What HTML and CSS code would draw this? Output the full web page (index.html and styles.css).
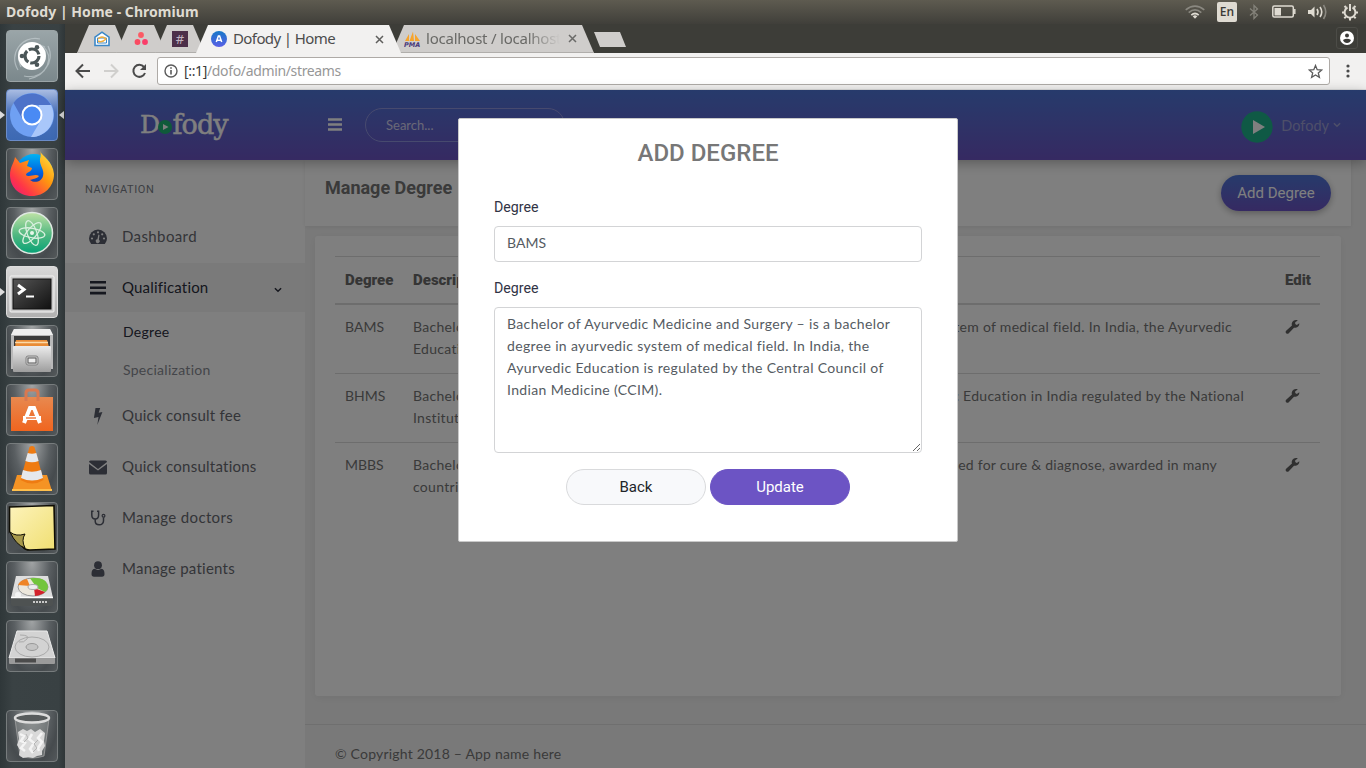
FILE: index.html
```html
<!DOCTYPE html>
<html lang="en">
<head>
<meta charset="utf-8">
<title>Dofody | Home</title>
<link rel="stylesheet" href="styles.css">
</head>
<body>
<svg width="0" height="0" class="defs">
  <defs>
    <linearGradient id="gAtom" x2="0" y2="1"><stop stop-color="#bfe3a6"/><stop offset=".55" stop-color="#4fb780"/><stop offset="1" stop-color="#07a276"/></linearGradient>
    <linearGradient id="gFox" x1="1" y1="0" x2="0" y2="1"><stop stop-color="#fff04a"/><stop offset=".4" stop-color="#ff980e"/><stop offset=".75" stop-color="#ff3647"/><stop offset="1" stop-color="#e31587"/></linearGradient>
    <linearGradient id="gBlue" x2="0" y2="1"><stop stop-color="#00b3f4"/><stop offset=".5" stop-color="#0060df"/><stop offset="1" stop-color="#2b1d6f"/></linearGradient>
    <linearGradient id="gSilver" x2="0" y2="1"><stop stop-color="#ececec"/><stop offset="1" stop-color="#9d9d9d"/></linearGradient>
    <linearGradient id="gOrange" x2="0" y2="1"><stop stop-color="#e8894f"/><stop offset="1" stop-color="#f0651f"/></linearGradient>
    <linearGradient id="gNote" x2="1" y2="1"><stop stop-color="#fdf3bb"/><stop offset="1" stop-color="#f0df72"/></linearGradient>
    <linearGradient id="gTerm" x2="1" y2="1"><stop stop-color="#555"/><stop offset=".6" stop-color="#2c2c2c"/><stop offset="1" stop-color="#111"/></linearGradient>
    <symbol id="wrench" viewBox="0 0 16 16"><path d="M1.2 12.4 7.4 6.9C6.6 4.2 8.3 1.3 11.6 1.1c.8 0 1.6.2 2 .4L10.900 3.400v1.900l1.700 1 2.700-1.700c.2 2.500-1.500 4.700-4 4.800-.6 0-1.200-.1-1.700-.2L4 15.200c-.8.8-2 .7-2.700 0-.8-.8-.8-2-.1-2.800z"/></symbol>
    <symbol id="chev" viewBox="0 0 8 6"><path d="M.9 1.2 4 4.200 7.100 1.200" fill="none" stroke="currentColor" stroke-width="1.500"/></symbol>
  </defs>
</svg>

<header class="panel">
  <div class="panel-title">Dofody | Home - Chromium</div>
  <div class="indicators">
    <svg class="i-wifi" width="20" height="14" viewBox="0 0 20 14" fill="none" stroke-width="1.700"><path d="M.7 4.800Q10-2.500 19.300 4.800M3.700 7.600Q10 2.200 16.300 7.600" stroke="#8a8880"/><path d="M6.300 10.200Q10 6.800 13.700 10.200" stroke="#dfdbd2"/><path d="M7.700 11.300Q10 9.400 12.300 11.300L10 13.700z" fill="#dfdbd2"/></svg>
    <span class="i-lang">En</span>
    <svg class="i-bt" width="10" height="16" viewBox="0 0 10 16" fill="none" stroke="#84827a" stroke-width="1.300"><path d="M1 4.500 8.500 11 5 14.500v-13L8.500 5 1 11.500"/></svg>
    <svg class="i-bat" width="24" height="14" viewBox="0 0 24 14"><rect x=".8" y="1" width="20.500" height="11" rx="1.500" fill="none" stroke="#dfdbd2" stroke-width="1.500"/><rect x="2.500" y="3" width="6.500" height="7.500" fill="#dfdbd2"/><path d="M22.800 4v5" stroke="#dfdbd2" stroke-width="1.500"/></svg>
    <svg class="i-vol" width="21" height="18" viewBox="0 0 21 18" fill="none" stroke="#dfdbd2" stroke-width="1.600"><path d="M1 7h3l3.500-3.500v11L4 11H1z" fill="#dfdbd2" stroke="none"/><path d="M10 6q2 3 0 6M13 4q3.500 5 0 10"/><path d="M16.500 2q4.500 7 0 14" stroke="#8a8880"/></svg>
    <svg class="i-gear" width="18" height="18" viewBox="0 0 18 18" fill="none" stroke="#dfdbd2" stroke-width="2"><path d="M6.500 4.500a5.400 5.400 0 1 0 5 0"/><path d="M9 1v7"/><path d="M3.500 3 5 4.500M14.500 3 13 4.500M1 9.500h2.500M14.500 9.500H17M3.300 15.300 5 13.600M14.700 15.300 13 13.600M9 15v2.500"/></svg>
  </div>
</header>

<div class="desktop">
  <nav class="launcher">
    <div class="tile t-dash"><svg viewBox="0 0 52 52"><g fill="none" stroke="#c6d0d2" stroke-opacity=".65" stroke-width="1.200"><path d="M12 40C2 24 16 5 34 9M42 16c8 16-6 34-24 30M15 37C7 20 22 7 39 17M37 16c12 12 4 29-14 33"/></g><circle cx="26" cy="26" r="14" fill="#fff"/><circle cx="26" cy="26" r="7" fill="none" stroke="#4b5658" stroke-width="3.200" stroke-dasharray="12.700 2"/><g fill="#4b5658"><circle cx="16" cy="26" r="2.300"/><circle cx="31" cy="17.300" r="2.300"/><circle cx="31" cy="34.700" r="2.300"/></g></svg></div>
    <div class="tile t-chromium active"><svg viewBox="0 0 52 52"><circle cx="26" cy="26" r="22" fill="#6fa0f3"/><path d="M7.500 14A22 22 0 0 1 45 16H26L17 31z" fill="#4d72c9"/><path d="M45 16A22 22 0 0 1 25 48L35 31 33 16z" fill="#a9c7fa"/><circle cx="26" cy="26" r="10.500" fill="#fff"/><circle cx="26" cy="26" r="8.500" fill="#4a8af4"/></svg></div>
    <div class="tile"><svg viewBox="0 0 52 52"><circle cx="28" cy="25" r="19" fill="url(#gBlue)"/><path d="M34 3c2 5 13 10 14 23 0 13-10 22-22 22C12 48 4 38 4 27c0-8 4-12 5-18l5 6 9-3-2 6 5 2c0 4-6 4-6 7 3 3 9-2 13 1-2 3-7 3-9 4 5 4 12 1 13-4 2-6-4-11-3-17 1-4 1-6 0-8z" fill="url(#gFox)"/></svg></div>
    <div class="tile"><svg viewBox="0 0 52 52"><circle cx="26" cy="26" r="20.500" fill="url(#gAtom)" stroke="#dfe8e2" stroke-width="1.500"/><g fill="none" stroke="#d9f0df" stroke-width="1.300"><ellipse cx="26" cy="26" rx="13" ry="4.800" transform="rotate(10 26 26)"/><ellipse cx="26" cy="26" rx="13" ry="4.800" transform="rotate(70 26 26)"/><ellipse cx="26" cy="26" rx="13" ry="4.800" transform="rotate(130 26 26)"/></g><circle cx="26" cy="26" r="2" fill="#e8f7ea"/></svg></div>
    <div class="tile t-term"><svg viewBox="0 0 52 52"><rect x="4" y="10" width="44" height="36" rx="1" fill="#c9c9c9" stroke="#f3f3f3"/><rect x="7" y="13" width="38" height="30" fill="url(#gTerm)" stroke="#111"/><path d="m12 19 6 4.500-6 4.500" fill="none" stroke="#fff" stroke-width="3"/><path d="M20 30.500h8" stroke="#fff" stroke-width="2"/></svg></div>
    <div class="tile"><svg viewBox="0 0 52 52"><path d="M8 4h36l3 6v34H5V10z" fill="#b9b9b9"/><path d="M8 4h36l3 6H5z" fill="#efefef"/><path d="M8 11h36v12H8z" fill="#3b3b3b"/><path d="M10 15h31l2 7H9z" fill="#e98b35"/><path d="M9 17.500h33" stroke="#fbd9a8" stroke-width="1.500"/><rect x="7" y="21" width="38" height="26" rx="1" fill="url(#gSilver)"/><rect x="20" y="31" width="12" height="9" rx="2" fill="#d5d5d5" stroke="#808080"/><rect x="22" y="33" width="8" height="5" fill="#eee" stroke="#555"/></svg></div>
    <div class="tile"><svg viewBox="0 0 52 52"><path d="M5 13h42v34H5z" fill="url(#gOrange)"/><path d="M20 17V9q0-3 3-3h6q3 0 3 3v8" fill="none" stroke="#d9784f" stroke-width="3"/><path d="m18 39 6-15h4l6 15" fill="none" stroke="#fff" stroke-width="4"/><path d="M17 34h18" stroke="#fff" stroke-width="4"/><path d="M20 34h10" stroke="#ef6b2a" stroke-width="1.300"/></svg></div>
    <div class="tile"><svg viewBox="0 0 52 52"><path d="M11 32h30l5 16H6z" fill="#f59324"/><path d="M6 46h40v2H6z" fill="#ffc04d"/><path d="M23.500 4q2.500-2 5 0l9 33q-11 7-23 0z" fill="#ee7b12"/><path d="m21.700 10-2.300 8q6.600 2.500 13.200 0L30.300 10q-4.300 1.500-8.600 0zM17 27l-2 8q11 5 22 0l-2-8q-9 3.500-18 0z" fill="#e5e8ec"/></svg></div>
    <div class="tile"><svg viewBox="0 0 52 52"><path d="M3.500 5 48 3.500 49 47 24 48q-5 0-7-3L3.500 31z" fill="url(#gNote)" stroke="#0f0d04" stroke-width="1.600"/><path d="M3 30 17 47 3 49z" fill="#4c5154"/><path d="M4 30q6 5 15 2-4 6 0 14-9-3-15-16z" fill="#a89a4b" stroke="#0f0d04"/></svg></div>
    <div class="tile"><svg viewBox="0 0 52 52"><path d="M10 15h32l5 22H5z" fill="#dedede"/><path d="M5 37h42v6q0 2-2 2H7q-2 0-2-2z" fill="#4e5252"/><path d="M5 36.500h42" stroke="#fff" stroke-width="1.500"/><ellipse cx="27" cy="26" rx="15" ry="9" fill="#ece7dc" stroke="#999"/><path d="M24 17.200q17-2 18 8.800 0 3-3 5l-8-4z" fill="#72c53b"/><path d="m28 27 11 4q-3 3-10 4z" fill="#d3222a"/><path d="m24 25-12-1q2-5 9-6z" fill="#ef8425"/><ellipse cx="27" cy="26" rx="5" ry="2.500" fill="#eee" stroke="#aaa"/><circle cx="12" cy="34" r="3" fill="#f4f4f4"/><path d="M27 41h14" stroke="#c9c9c9" stroke-width="2" stroke-dasharray="2 1"/></svg></div>
    <div class="tile"><svg viewBox="0 0 52 52"><path d="M11 11h30l8 27H3z" fill="#d3d3d3" stroke="#ececec"/><path d="M3 38h46v5q0 1-1 1H4q-1 0-1-1z" fill="#9a9a9a"/><path d="M9 38.500h21v4H9z" fill="#4c4c4c"/><ellipse cx="26" cy="27" rx="17" ry="10" fill="none" stroke="#aaa"/><ellipse cx="26" cy="27" rx="6" ry="3.500" fill="#c4c4c4" stroke="#999"/><path d="M14 15q10 0 7 4t-8 3" fill="none" stroke="#aaa"/></svg></div>
    <div class="tile t-trash"><svg viewBox="0 0 52 52"><path d="M9 9h34l-5 37q-12 4-24 0z" fill="#8b8f90" fill-opacity=".5" stroke="#aaa" stroke-width=".7"/><ellipse cx="26" cy="8" rx="17" ry="4.500" fill="#575b5c" stroke="#dcdcdc" stroke-width="2.500"/><path d="m12 22 5-3 4 2 4-2 4 3 5-3 5 4-1 8 1 5-3 5v4l-5 1-4 2-5-1-5 1-4-3 1-5-3-5 2-6z" fill="#d9d9d9"/><path d="m14 24 4 2-3 5 4 2-4 5 4 3M26 24l-3 5 5 4-4 6 3 4M36 23l-4 5 4 4-4 6 1 3" fill="none" stroke="#f4f4f4" stroke-width="2.500"/><path d="m20 24 2 4-4 4M32 30l-4 4 3 4-4 4" fill="none" stroke="#b5b5b5"/></svg></div>
  </nav>

  <main class="browser">
    <div class="tabstrip">
      <div class="tab pinned"><svg width="16" height="16" viewBox="0 0 16 16"><path d="M1 6.200 8 1.200l7 5V14.500H1z" fill="#fff" stroke="#3b88c8" stroke-width="1.600"/><path d="M3.500 7h9v5h-9z" fill="none" stroke="#3b88c8"/><path d="M4 8q4-4 8 0-4 4-8 2" fill="none" stroke="#f0ac3c" stroke-width="1.400"/></svg></div>
      <div class="tab pinned"><svg width="16" height="16" viewBox="0 0 16 16"><circle cx="8" cy="4" r="2.900" fill="#fc5a64"/><circle cx="4.500" cy="11" r="2.900" fill="#fa4b62"/><circle cx="12" cy="11" r="2.900" fill="#fa3d6a"/></svg></div>
      <div class="tab pinned p3"><span class="slack">#</span></div>
      <div class="tab current"><svg class="fav" width="16" height="16" viewBox="0 0 16 16"><defs><linearGradient id="gF" x2="0" y2="1"><stop stop-color="#1678c8"/><stop offset="1" stop-color="#5a5fe6"/></linearGradient></defs><circle cx="8" cy="8" r="8" fill="url(#gF)"/><path d="m5.300 11 2.100-6h1.200l2.100 6M6.200 9.300h3.600" fill="none" stroke="#fff" stroke-width="1.500"/></svg><span class="tab-t">Dofody | Home</span><svg class="x" width="9" height="9" viewBox="0 0 9 9"><path d="m1 1 7 7M8 1 1 8" stroke="#5f5f5d" stroke-width="1.500"/></svg></div>
      <div class="tab other"><svg class="fav" width="17" height="16" viewBox="0 0 17 16"><path d="m1 10 4-7v7zM5.500 10 9 .5l1 9.500zM11 10V3l5 7z" fill="#f7a42b"/><text x="0" y="15.500" class="pma">PMA</text></svg><span class="tab-t faded">localhost / localhost</span><svg class="x" width="9" height="9" viewBox="0 0 9 9"><path d="m1 1 7 7M8 1 1 8" stroke="#6a6a68" stroke-width="1.500"/></svg></div>
      <div class="newtab"></div>
      <div class="avatar"><svg width="14" height="14" viewBox="0 0 14 14"><circle cx="7" cy="7" r="7" fill="#fff"/><circle cx="7" cy="4.600" r="2" fill="#3c3b37"/><path d="M3 9q4-2.500 8 0-1 3-4 3t-4-3z" fill="#3c3b37"/></svg></div>
    </div>
    <div class="toolbar">
      <svg class="nav" width="16" height="16" viewBox="0 0 16 16" fill="none" stroke="#4a4a4a" stroke-width="2"><path d="M15 8H2M8 1.500 1.500 8 8 14.500"/></svg>
      <svg class="nav" width="16" height="16" viewBox="0 0 16 16" fill="none" stroke="#d0cfcd" stroke-width="2"><path d="M1 8h13M8 1.500 14.500 8 8 14.500"/></svg>
      <svg class="nav" width="16" height="16" viewBox="0 0 16 16"><path d="M13 4a6 6 0 1 0 1 6" fill="none" stroke="#4a4a4a" stroke-width="2"/><path d="M15 1v6H9z" fill="#4a4a4a"/></svg>
      <div class="omni"><svg width="14" height="14" viewBox="0 0 14 14" fill="none" stroke="#5b5b5b"><circle cx="7" cy="7" r="6" stroke-width="1.400"/><path d="M7 6v4.500M7 3.300v1.500" stroke-width="1.600"/></svg><span class="url"><b>[::1]</b>/dofo/admin/streams</span><svg class="star" width="15" height="15" viewBox="0 0 15 15" fill="none" stroke="#5b5b5b" stroke-width="1.300"><path d="m7.500 1.500 1.700 4.200 4.600.3-3.500 2.900 1.100 4.400-3.900-2.400-3.900 2.400L4.700 8.900 1.200 6l4.600-.3z"/></svg></div>
      <svg class="dots" width="4" height="14" viewBox="0 0 4 14" fill="#4a4a4a"><circle cx="2" cy="2" r="1.600"/><circle cx="2" cy="7" r="1.600"/><circle cx="2" cy="12" r="1.600"/></svg>
    </div>

    <div class="page">
      <header class="topbar">
        <div class="logo"><span>D</span><svg width="14" height="14" viewBox="0 0 14 14"><circle cx="7" cy="7" r="7" fill="#1fb574"/><path d="m5 4 5.500 3L5 10z" fill="#fff"/></svg><span class="rest">fody</span></div>
        <svg class="burger" width="14" height="14" viewBox="0 0 14 14" stroke="#fff" stroke-width="2.400"><path d="M0 1.500h14M0 6.500h14M0 11.500h14"/></svg>
        <div class="search"><span>Search...</span><svg width="12" height="12" viewBox="0 0 12 12" fill="none" stroke="#b9b4de"><circle cx="5" cy="5" r="4"/><path d="m8 8 3.500 3.500"/></svg></div>
        <div class="user"><svg width="32" height="32" viewBox="0 0 32 32"><circle cx="16" cy="16" r="15.700" fill="#1fb38a"/><path d="m12 9 12 7-12 7z" fill="#fff"/></svg><span>Dofody</span><svg class="uc" width="8" height="6"><use href="#chev"/></svg></div>
      </header>
      <div class="body">
        <aside class="side">
          <h6>NAVIGATION</h6>
          <a class="item"><svg viewBox="0 0 18 16"><path d="M2.200 15Q0 12.500 0 9.500a9 9 0 0 1 18 0q0 3-2.200 5.500z"/><g fill="#fff"><circle cx="3" cy="9.500" r="1.100"/><circle cx="4.800" cy="5.300" r="1.100"/><circle cx="9" cy="3.300" r="1.100"/><circle cx="13.200" cy="5.300" r="1.100"/><circle cx="15" cy="9.500" r="1.100"/><path d="M9.400 5.500 10.500 6 9.900 10.700a1.900 1.900 0 1 1-1.500-.4z"/></g></svg><span class="s4">Dashboard</span></a>
          <a class="item on"><svg viewBox="0 0 18 16"><path d="M1 1h16v2.600H1zM1 6.400h16V9H1zM1 11.800h16v2.600H1z"/></svg><span class="s2">Qualification</span><svg class="ch" width="8" height="6" viewBox="0 0 8 6"><use href="#chev"/></svg></a>
          <div class="sub"><a class="cur">Degree</a><a>Specialization</a></div>
          <a class="item"><svg viewBox="0 0 18 16"><path d="M6.500 0h4.700L9.700 4.800l3.700-.9L8.300 17l1.200-8-4.600 1z"/></svg><span>Quick consult fee</span></a>
          <a class="item"><svg viewBox="0 0 18 16"><path d="M1.500 1.500h15A1.500 1.500 0 0 1 18 3L9 10 0 3a1.500 1.500 0 0 1 1.500-1.500zM0 5l9 6.500L18 5v9a1.500 1.500 0 0 1-1.500 1.500h-15A1.500 1.500 0 0 1 0 14z"/></svg><span>Quick consultations</span></a>
          <a class="item"><svg viewBox="0 0 18 16"><path d="M4.500 1.300H2.800V5q0 4 3.400 4T9.600 5V1.300H8M6.200 9v2q0 3.800 4 3.800T14.500 11V7.500" fill="none" stroke="#585c6a" stroke-width="1.500"/><circle cx="14.500" cy="5.800" r="1.400" fill="none" stroke="#585c6a" stroke-width="1.200"/></svg><span class="s3">Manage doctors</span></a>
          <a class="item"><svg viewBox="0 0 18 16"><circle cx="9" cy="4.200" r="3.900"/><path d="M5.500 7.800Q9 10 12.500 7.800q3 .2 3 5.200 0 2.800-2.500 2.800H5Q2.500 15.800 2.500 13q0-5 3-5.200z"/></svg><span>Manage patients</span></a>
        </aside>
        <section class="content">
          <div class="titlebar"><h1>Manage Degree</h1><button class="add">Add Degree</button></div>
          <div class="card">
            <div class="row head"><b>Degree</b><b class="c2">Description</b><b class="c3">Edit</b></div>
            <div class="row"><span>BAMS</span><div class="c2"><p class="r1"><span>Bachelor of</span><span>system of medical field. In India, the Ayurvedic</span></p><p>Education</p></div><svg class="c3"><use href="#wrench"/></svg></div>
            <div class="row"><span>BHMS</span><div class="c2"><p class="r2"><span>Bachelor of</span><span>Homeopathic Education in India regulated by the National</span></p><p>Institute</p></div><svg class="c3"><use href="#wrench"/></svg></div>
            <div class="row"><span>MBBS</span><div class="c2"><p class="r3"><span>Bachelor of</span><span class="tight">used for cure &amp; diagnose, awarded in many</span></p><p>countries</p></div><svg class="c3"><use href="#wrench"/></svg></div>
          </div>
          <footer>© Copyright 2018 – App name here</footer>
        </section>
      </div>
      <div class="backdrop">
        <form class="modal">
          <h2>ADD DEGREE</h2>
          <label>Degree</label>
          <input value="BAMS">
          <label class="l2">Degree</label>
          <textarea>Bachelor of Ayurvedic Medicine and Surgery – is a bachelor
degree in ayurvedic system of medical field. In India, the
Ayurvedic Education is regulated by the Central Council of
Indian Medicine (CCIM).</textarea>
          <div class="actions"><button type="button" class="back">Back</button><button type="button" class="upd">Update</button></div>
        </form>
      </div>
    </div>
  </main>
</div>
</body>
</html>
```
FILE: styles.css
```css
* { box-sizing: border-box; }
body { margin: 0; width: 1366px; height: 768px; overflow: hidden; font-family: Lato, "Noto Sans", sans-serif; background: #3c3b37; }
h1, h2, h6, p { margin: 0; }
svg { display: block; flex: none; }
.defs { position: absolute; }

/* system panel */
.panel { height: 24px; display: flex; justify-content: space-between; background: linear-gradient(#5e5b50, #403f3a); color: #dfdbd2; }
.panel-title { padding-left: 6px; font: 700 14px/23px "Noto Sans", sans-serif; letter-spacing: .04px; }
.indicators { display: flex; align-items: center; padding-right: 7px; }
.i-wifi { margin-left: -1px; }
.i-lang { width: 20px; height: 20px; margin: 0 12px; border-radius: 2px; background: #dfdbd2; color: #3c3b37; font: 600 12px/20px "Open Sans", sans-serif; text-align: center; }
.i-bat { margin-left: 13px; }
.i-vol { margin: 0 13px 0 11px; }

.desktop { display: flex; height: 744px; }
.launcher { width: 65px; padding: 6px 0 6px 6px; display: flex; flex-direction: column; gap: 7px; background: linear-gradient(90deg, #2f3739, #3a4244 20%, #394143 90%, #2f3638); }
.tile { position: relative; width: 52px; height: 52px; border-radius: 4px; border: 1px solid #777c7d; background: radial-gradient(ellipse at 50% 0, #a1a4a5 0, #5a5f62 50%, #464b4e 75%, #54595b 100%); }
.tile svg { width: 52px; height: 52px; margin: -1px; }
.t-dash { background: linear-gradient(#9aa5a8, #7b888c); border-color: #9ba4a6; }
.t-chromium { background: linear-gradient(#a9bce2, #4a72bb 45%, #3d69b3); border-color: #6b8cc9; }
.t-term { background: linear-gradient(#d8d8d8, #b1b1b1); border-color: #ddd; }
.t-trash { margin-top: auto; }
.active::before, .active::after, .t-term::before { content: ""; position: absolute; top: 21px; border: 4px solid transparent; }
.active::before, .t-term::before { left: -7px; border-left: 5px solid #dcdcdc; border-right: 0; }
.active::after { right: -7px; border-right: 5px solid #dcdcdc; border-left: 0; }

/* browser chrome */
.browser { flex: 1; display: flex; flex-direction: column; min-width: 0; }
.tabstrip { height: 29px; display: flex; align-items: flex-start; padding: 1px 8px 0 12px; background: #3d3d38; }
.tab { height: 28px; display: flex; align-items: center; background: #cfcdcb; font: 15px "Noto Sans", sans-serif; color: #696966; clip-path: polygon(12px 0, calc(100% - 12px) 0, 100% 100%, 0 100%); border-bottom: 1px solid #b0aeab; }
.pinned { width: 50px; margin-right: -11px; justify-content: center; padding-right: 1px; }
.p3 { margin-right: -9px; padding-right: 0; }
.slack { width: 16px; height: 16px; background: #4d304a; color: #c0b3c0; font: 13px/16px "Noto Sans", sans-serif; text-align: center; }
.current { width: 205px; padding-left: 15px; background: #f2f1f0; color: #4c4c4c; border: 0; z-index: 1; }
.tab-t { margin: -2px 0 0 6px; letter-spacing: -.6px; white-space: nowrap; overflow: hidden; width: 142px; }
.other { width: 202px; margin-left: -9px; padding-left: 12px; }
.tab-t.faded { letter-spacing: -.23px; width: 134px; margin: -1px 8px 0 5px; -webkit-mask-image: linear-gradient(90deg, #000 75%, transparent); mask-image: linear-gradient(90deg, #000 75%, transparent); }
.pma { font: italic 700 6.5px "DejaVu Sans", sans-serif; fill: #4a3a7a; }
.newtab { width: 32px; height: 15px; margin: 7px 0 0; background: #cfcdcb; clip-path: polygon(0 0, 26px 0, 100% 100%, 6px 100%); }
.avatar { width: 22px; height: 22px; margin: 2px 0 0 auto; border: 1px solid #4c4c47; border-radius: 3px; display: flex; align-items: center; justify-content: center; }
.toolbar { height: 37px; display: flex; align-items: center; padding: 0 16px 0 10px; background: #f2f1f0; border-bottom: 1px solid #ddd; }
.nav { margin-right: 12px; }
.omni { width: 1173px; height: 28px; margin: 0 0 0 -2px; display: flex; align-items: center; padding: 0 6px; background: #fff; border: 1px solid #aeaaa6; border-radius: 3px; }
.url { margin: -2px 0 0 6px; font: 14px "Noto Sans", sans-serif; letter-spacing: -.35px; color: #979797; }
.url b { font-weight: 400; color: #3a3a3a; }
.star { margin-left: auto; }
.dots { margin-left: auto; }

/* web page */
.page { position: relative; flex: 1; display: flex; flex-direction: column; background: #fff; }
.topbar { height: 70px; display: flex; align-items: center; padding: 0 25px 0 75px; background: linear-gradient(#4e76d8, #6c54c4); box-shadow: 0 3px 12px rgba(0,0,0,.3); z-index: 1; }
.logo { width: 188px; display: flex; align-items: center; color: #fff; font: 25px/34px "DejaVu Serif", serif; letter-spacing: -1.6px; -webkit-text-stroke: .5px #fff; }
.logo svg { margin: 4px 0 0 0; }
.logo .rest { font-size: 27px; letter-spacing: -.9px; }
.search { width: 200px; height: 34px; margin-left: 23px; padding: 0 18px 0 20px; display: flex; align-items: center; justify-content: space-between; border: 1px solid #8f94dd; border-radius: 17px; font-size: 13px; color: #d3d0ee; }
.user { margin-left: auto; display: flex; align-items: center; color: #9d9fd3; font-size: 14.5px; }
.user > svg:first-child { margin: 3px 8px 0 0; }
.uc { margin-left: 4px; }
.body { flex: 1; display: flex; min-height: 0; }
.side { width: 240px; background: #fff; color: #585c6a; fill: #585c6a; }
.side h6 { height: 52px; padding: 22px 0 0 20px; font: 11px/15px Roboto, sans-serif; letter-spacing: .58px; color: #7a7f88; }
.item { height: 49px; margin-bottom: 2px; display: flex; align-items: center; padding-left: 24px; font-size: 15px; letter-spacing: .25px; color: #686a71; }
.item > svg:first-child { width: 18px; height: 16px; margin-right: 15px; overflow: visible; }
.item > span { margin-top: -2px; }
.s2 { letter-spacing: .18px; }
.s3 { letter-spacing: .34px; }
.s4 { letter-spacing: .39px; }
.item.on { height: 49px; background: #f5f5f5; color: #2b2e3c; fill: #2b2e3c; }
.item .ch { margin: 4px 23px 0 auto; }
.sub { height: 76px; margin: -1px 0 2px; padding: 0 0 0 58px; display: flex; flex-direction: column; font-size: 14px; line-height: 38px; letter-spacing: .28px; color: #888b93; }
.sub .cur { color: #2b2e3c; }
.content { flex: 1; background: #f3f3f3; color: #757575; }
.titlebar { width: 1046px; height: 66px; padding: 15px 20px 0; display: flex; justify-content: space-between; background: #fff; box-shadow: 0 1px 4px rgba(0,0,0,.08); }
.titlebar h1 { font: 700 18px/26px Roboto, sans-serif; color: #747474; }
.add { width: 110px; height: 36px; border: 0; border-radius: 18px; color: #fff; font: 15px Roboto, sans-serif; background: linear-gradient(#4e76d8, #6c54c4); box-shadow: 0 2px 7px rgba(0,0,0,.3); }
.card { width: 1026px; height: 460px; margin: 10px 0 28px 10px; padding: 20px; background: #fff; border-radius: 3px; box-shadow: 0 2px 8px rgba(0,0,0,.06); }
.row { width: 985px; height: 69px; padding: 11px 10px 0; border-top: 1px solid #dadada; display: grid; grid-template-columns: 68px 872px 25px; font-size: 14px; line-height: 22px; letter-spacing: .3px; color: #757575; fill: #606060; }
.row.head { height: 47px; padding-top: 12px; font: 700 15px/22px Roboto, sans-serif; letter-spacing: 0; color: #6a6a6a; }
.row.head + .row { border-top-width: 2px; height: 70px; }
.row p { display: flex; justify-content: space-between; white-space: nowrap; }
.row > span:first-child { letter-spacing: 0; }
.row .tight { letter-spacing: .24px; }
.r1 { width: 819px; }
.r2 { width: 831px; }
.r3 { width: 804px; }
.row svg.c3 { width: 15px; height: 15px; margin-top: 3px; }
footer { height: 44px; padding: 18px 30px 0; border-top: 1px solid #dedede; font-size: 14px; line-height: 22px; letter-spacing: .2px; }

/* dialog */
.backdrop { position: absolute; inset: 0; display: flex; justify-content: center; align-items: flex-start; padding: 28px 0 0; background: rgba(0,0,0,.5); z-index: 2; }
.modal { width: 500px; height: 424px; margin-right: 15px; padding: 17px 35px; display: flex; flex-direction: column; background: #fff; border: 1px solid #c9c9c9; border-radius: 2px; }
.modal h2 { margin-bottom: 37px; font: 500 24px/34px Roboto, sans-serif; text-align: center; color: #777; }
.modal label { height: 18px; font: 14.2px/18px Roboto, sans-serif; color: #313445; margin-bottom: 10px; margin-top: -9px; }
.modal .l2 { margin-top: 17px; margin-bottom: 10px; }
.modal input, .modal textarea { display: block; width: 428px; border: 1px solid #d3d4d6; border-radius: 4px; padding: 0 12px 3px; font: 14px/22px Lato, sans-serif; color: #555b62; outline: 0; }
.modal input { height: 36px; }
.modal textarea { height: 146px; padding-top: 5px; letter-spacing: .35px; white-space: pre; }
.actions { display: flex; justify-content: center; gap: 4px; margin-top: 16px; }
.actions button { width: 140px; height: 36px; border: 1px solid #d9dadc; border-radius: 18px; background: #f8f9fb; color: #212529; font: 15px Roboto, sans-serif; }
.actions .upd { background: #6c54c4; border-color: #6c54c4; color: #fff; }
```
